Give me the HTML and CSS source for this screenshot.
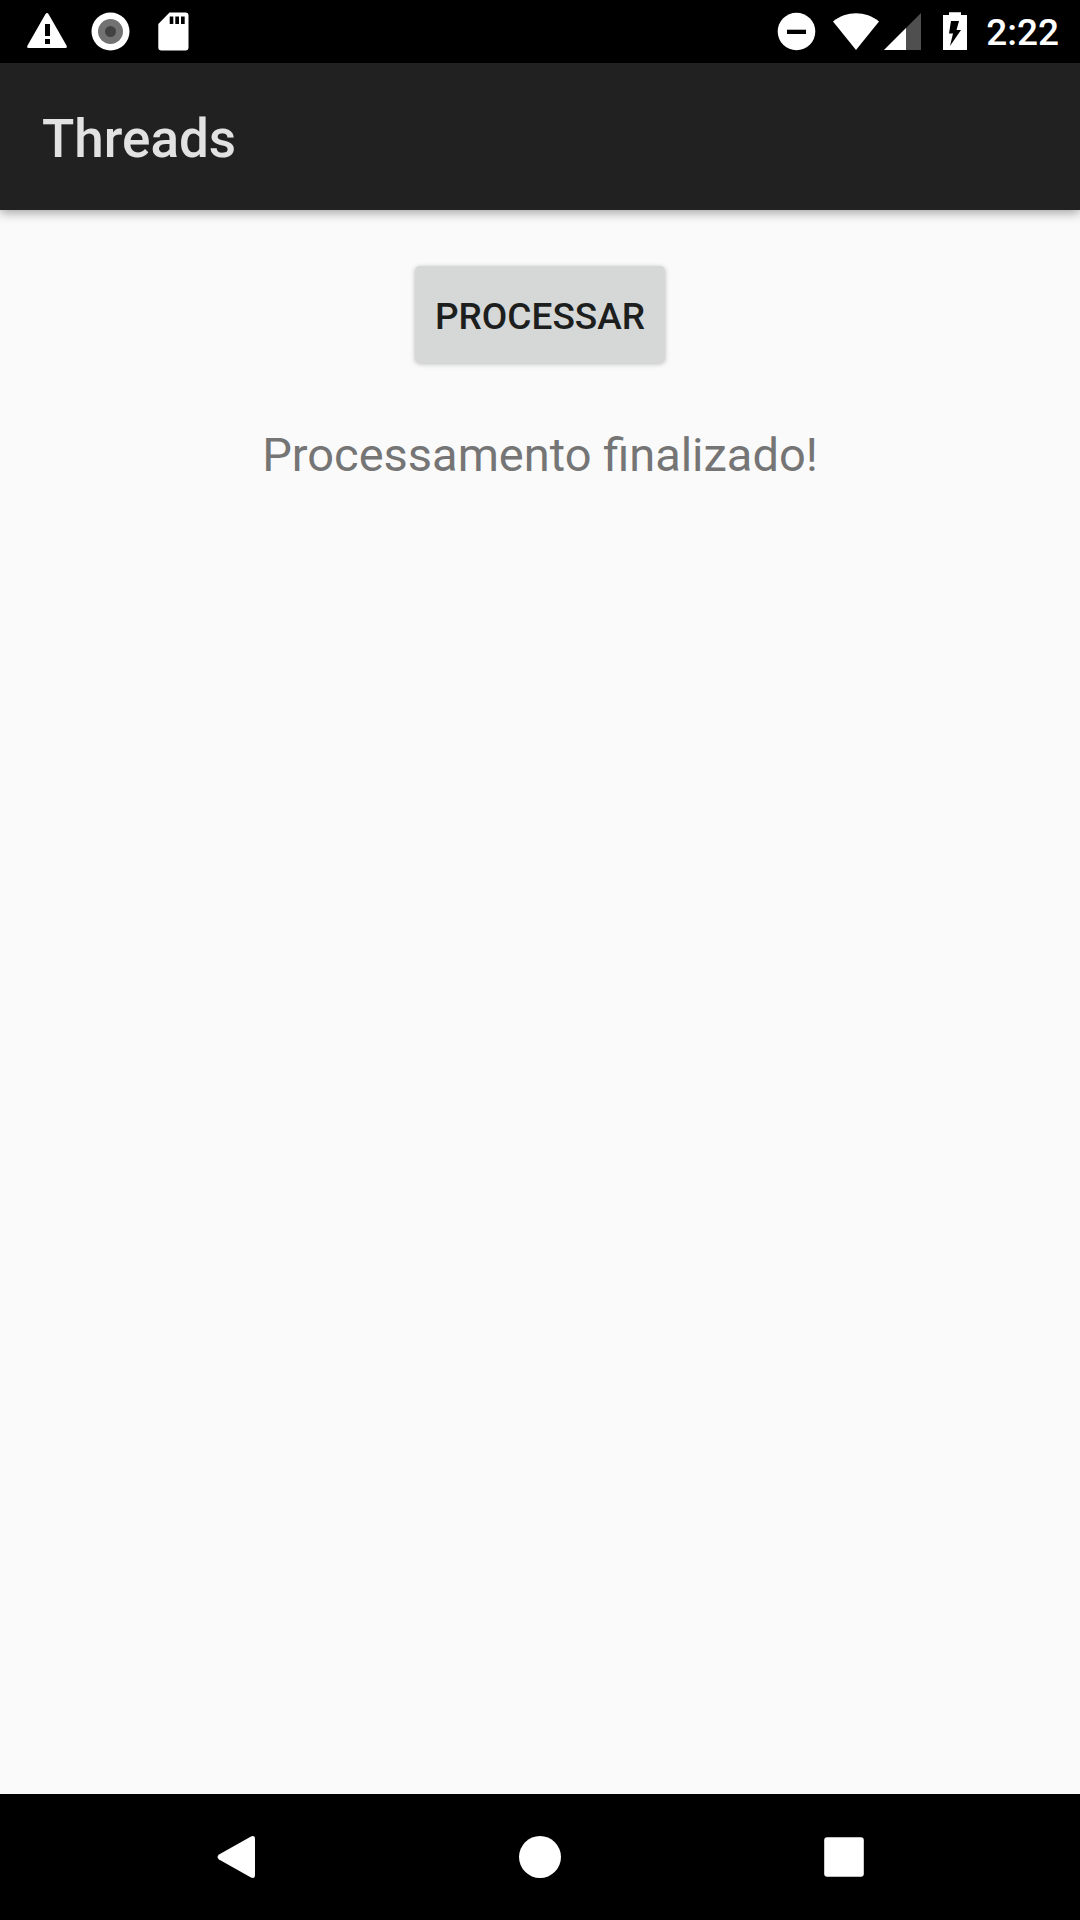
FILE: index.html
```html
<!DOCTYPE html>
<html lang="pt-BR">
<head>
<meta charset="utf-8">
<meta name="viewport" content="width=device-width, initial-scale=1">
<title>Threads</title>
<link rel="stylesheet" href="styles.css">
</head>
<body>
<div class="screen">
  <div class="status-bar">
    <div class="status-group">
      <svg width="63" height="63" viewBox="0 0 63 63" role="img" aria-label="Aviso"><path fill="#fff" fill-rule="evenodd" d="M29.500 14Q31 12 32.500 14L50.500 45.500Q51.500 48 49.500 48H12.500Q10.500 48 11.500 45.500ZM29 24V36H34V24ZM29 39V44H34V39Z"/></svg>
      <svg width="63" height="63" viewBox="0 0 63 63" role="img" aria-label="Gravação"><circle cx="31.500" cy="31.500" r="19" fill="#fff"/><circle cx="31.500" cy="31.500" r="12.500" fill="#727272"/><circle cx="31.500" cy="31.500" r="5.500" fill="#424242"/></svg>
      <svg width="63" height="63" viewBox="0 0 63 63" role="img" aria-label="Cartão SD"><path fill="#fff" fill-rule="evenodd" d="M27.500 12.500H43.500Q46.500 12.500 46.500 15.500V47.500Q46.500 50.500 43.500 50.500H19.500Q16.300 50.500 16.300 47.500V24ZM27.700 16.500V24H31.300V16.500ZM33.300 16.500V24H37V16.500ZM39 16.500V24H42.700V16.500Z"/></svg>
    </div>
    <div class="status-group">
      <svg width="63" height="63" viewBox="0 0 63 63" role="img" aria-label="Não perturbe"><circle cx="31.500" cy="31.500" r="18.800" fill="#fff"/><path d="M22 29.700H41V34H22Z"/></svg>
      <svg width="56" height="63" viewBox="0 0 56 63" role="img" aria-label="Wi-Fi"><path fill="#fff" d="M5 21.500C18 10.500 38 10.500 51 21.500L28 50Z"/></svg>
      <svg width="42" height="63" viewBox="0 0 42 63" role="img" aria-label="Sinal"><path fill="#4f4f4f" d="M37 13V50H0Z"/><path fill="#fff" d="M22 28V50H0Z"/></svg>
      <svg width="56" height="63" viewBox="0 0 56 63" role="img" aria-label="Bateria carregando"><path fill="#fff" d="M23 12.300H35V15H41V50H17V15H23Z"/><path d="M25 21H33L30.500 30H35L24 46L27 33.500H23Z"/></svg>
      <time class="clock">2:22</time>
    </div>
  </div>
  <header class="app-bar"><h1 class="title">Threads</h1></header>
  <main class="content">
    <button class="action" type="button">PROCESSAR</button>
    <p class="message">Processamento finalizado!</p>
  </main>
  <nav class="nav-bar">
    <button class="nav-button" type="button" aria-label="Voltar"><svg width="126" height="126" viewBox="0 0 126 126"><path fill="#fff" d="M46 60.500L78 42.500Q82 41 82 45V81Q82 85 78 83.500L46 65.500Q43 63 46 60.500Z"/></svg></button>
    <button class="nav-button" type="button" aria-label="Início"><svg width="126" height="126" viewBox="0 0 126 126"><circle cx="63" cy="63" r="21" fill="#fff"/></svg></button>
    <button class="nav-button" type="button" aria-label="Recentes"><svg width="126" height="126" viewBox="0 0 126 126"><rect x="43.200" y="43.200" width="39.600" height="39.600" rx="3" fill="#fff"/></svg></button>
  </nav>
</div>
</body>
</html>
```
FILE: styles.css
```css
* {
  box-sizing: border-box;
}

body {
  margin: 0;
  font-family: Roboto, "Noto Sans", sans-serif;
  background: #fafafa;
}

svg {
  display: block;
  flex: none;
}

.screen {
  display: flex;
  flex-direction: column;
  min-height: 100vh;
}

.status-bar {
  display: flex;
  justify-content: space-between;
  padding: 0 21px 0 16px;
  background: #000;
}

.status-group {
  display: flex;
  align-items: center;
}

.clock {
  padding: 2px 0 0 4px;
  color: #fff;
  font-size: 37px;
  font-weight: 500;
  line-height: 43px;
}

.app-bar {
  padding: 45px 42px 39px;
  background: #212121;
  box-shadow: 0 3px 10px rgba(0, 0, 0, 0.35);
}

.title {
  margin: 0;
  color: #e2e2e2;
  font-size: 53px;
  font-weight: 500;
  line-height: 63px;
}

.content {
  flex: 1;
  display: flex;
  flex-direction: column;
  align-items: center;
  gap: 60px;
  padding: 56px 42px;
}

.action {
  padding: 29px 20px 25px;
  border: 0;
  border-radius: 5px;
  background: #d6d8d7;
  box-shadow: 0 1px 5px rgba(0, 0, 0, 0.25);
  color: #1d1e1e;
  font-family: inherit;
  font-size: 37px;
  font-weight: 500;
  line-height: 43px;
}

.message {
  margin: 0;
  color: #757575;
  font-size: 47px;
  line-height: 64px;
  text-align: center;
}

.nav-bar {
  display: grid;
  grid-template-columns: repeat(3, 1fr);
  padding: 0 84px;
  background: #000;
}

.nav-button {
  display: flex;
  justify-content: center;
  padding: 0;
  border: 0;
  background: none;
}
```
